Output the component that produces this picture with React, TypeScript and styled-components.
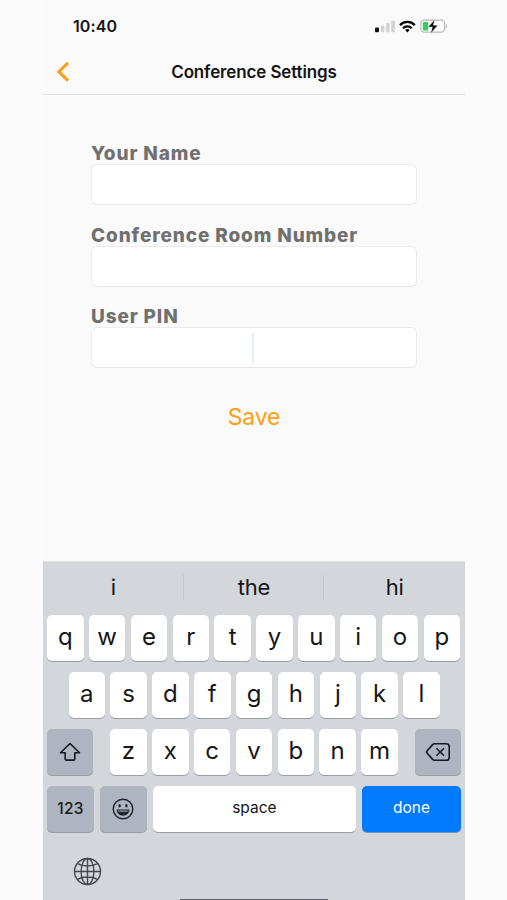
import React from "react";
import styled, { createGlobalStyle } from "styled-components";

const GlobalStyle = createGlobalStyle`
  * { box-sizing: border-box; }
  body { margin: 0; background: #fbfbfb; font-family: Inter, "Liberation Sans", sans-serif; color: #141414; }
`;

const Phone = styled.main`
  width: 422px;
  height: 900px;
  margin-left: 43px;
  background: #fafafa;
  display: flex;
  flex-direction: column;
  overflow: hidden;
`;

const StatusBar = styled.div`
  height: 50px;
  padding: 3px 17px 0 30px;
  display: flex;
  align-items: center;
  justify-content: space-between;
`;

const Clock = styled.span`
  margin-top: -2px;
  font-size: 16px;
  font-weight: 600;
  letter-spacing: 0.1px;
`;

const StatusIcons = styled.svg`
  display: block;
  width: 74px;
  height: 18px;
`;

const NavBar = styled.header`
  height: 45px;
  display: grid;
  grid-template-columns: 40px 1fr 40px;
  align-items: center;
  border-bottom: 1px solid #e2e2e2;
`;

const BackButton = styled.button`
  border: 0;
  background: none;
  padding: 0 0 0 13px;
  height: 44px;
  display: flex;
  align-items: center;
`;

const Title = styled.h1`
  margin: 0;
  font-size: 17px;
  font-weight: 600;
  letter-spacing: -0.13px;
  text-align: center;
`;

const Form = styled.form`
  flex: 1;
  padding: 46px 48px 0;
  display: flex;
  flex-direction: column;
`;

const Field = styled.div`
  height: 81.5px;
  display: flex;
  flex-direction: column;
`;

const Label = styled.label`
  height: 23px;
  line-height: 25px;
  font-size: 19px;
  font-weight: 800;
  letter-spacing: 0.87px;
  color: #707070;
  white-space: nowrap;
`;

const Input = styled.div`
  height: 41px;
  width: 326px;
  display: flex;
  align-items: center;
  justify-content: center;
  border: 1px solid #ebebeb;
  border-bottom-color: #e6e6e6;
  border-radius: 6px;
  background: #fff;
`;

const Caret = styled.span`
  width: 2px;
  height: 31px;
  margin: 2px 3px 0 0;
  background: #e1effc;
`;

const SaveButton = styled.button`
  align-self: center;
  margin-top: 17px;
  padding: 0;
  border: 0;
  background: none;
  font: 400 23px/28px Inter, sans-serif;
  letter-spacing: -0.2px;
  color: #ff9d14;
`;

const Keyboard = styled.section`
  height: 339.5px;
  border-top: 1px solid #dfe1e4;
  background: #d3d6db;
  display: flex;
  flex-direction: column;
`;

const Suggestions = styled.div`
  height: 53px;
  flex: none;
  display: grid;
  grid-template-columns: repeat(3, 1fr);
  align-items: center;
  padding-bottom: 2px;
`;

const Suggestion = styled.span`
  height: 27px;
  line-height: 27px;
  font-size: 22px;
  text-align: center;
  letter-spacing: -0.2px;
  & + & { border-left: 1px solid #c6c9ce; margin-left: -1px; }
`;

const KeyRow = styled.div<{ $inset?: number }>`
  height: 57px;
  flex: none;
  display: flex;
  justify-content: space-between;
  padding: 0 ${(p) => 4 + (p.$inset ?? 0)}px;
`;

const LetterGroup = styled.div`
  display: flex;
  gap: 5.35px;
`;

const Key = styled.button<{ $width?: number; $tone?: "light" | "dark" | "blue"; $size?: number; $weight?: number }>`
  width: ${(p) => p.$width ?? 36.5}px;
  height: 46px;
  padding: 0 0 3px;
  border: 0;
  border-radius: 5px;
  display: flex;
  align-items: center;
  justify-content: center;
  background: ${(p) => (p.$tone === "dark" ? "#afb5c0" : p.$tone === "blue" ? "#007aff" : "#fff")};
  box-shadow: 0 1px 0.5px ${(p) => (p.$tone === "blue" ? "#7393b8" : "#9a9da2")};
  color: ${(p) => (p.$tone === "blue" ? "#fff" : "#171717")};
  font-family: Inter, sans-serif;
  font-size: ${(p) => p.$size ?? 24}px;
  font-weight: ${(p) => p.$weight ?? 400};
`;

const NumberLabel = styled.span`
  padding-top: 2px;
  letter-spacing: 0.2px;
`;

const KeyIcon = styled.svg`
  display: block;
  margin-top: 3px;
`;

const BottomBar = styled.footer`
  flex: 1;
  display: grid;
  grid-template-columns: 137px 148px 1fr;
`;

const GlobeIcon = styled.svg`
  margin: 14px 0 0 30px;
`;

const HomeIndicator = styled.div`
  align-self: end;
  height: 1.5px;
  background: #5d6069;
`;

const fields = [
  { label: "Your Name" },
  { label: "Conference Room Number" },
  { label: "User PIN", focused: true },
];

function Letters({ text }: { text: string }) {
  return (
    <LetterGroup>
      {text.split("").map((c) => <Key key={c}>{c}</Key>)}
    </LetterGroup>
  );
}

export default function App() {
  return (
    <>
      <GlobalStyle />
      <Phone>
        <StatusBar>
          <Clock>10:40</Clock>
          <StatusIcons viewBox="0 0 74 18">
            <rect x="1" y="9.4" width="4" height="4.8" rx="1" fill="#111" />
            <g fill="#d2d2d2">
              <rect x="6.7" y="7.5" width="3.6" height="6.7" rx="1" />
              <rect x="12" y="5" width="3.6" height="9.2" rx="1" />
              <rect x="17.2" y="2.4" width="3.6" height="11.8" rx="1" />
            </g>
            <g fill="none" stroke="#080808" strokeWidth="2.3">
              <path d="M26 7.1c4.1-4.2 10.7-4.2 14.8 0M29 10.2c2.5-2.5 6.3-2.5 8.8 0" />
            </g>
            <path d="M31.1 11.9c1.3-1.1 3.3-1.1 4.6 0l-2.3 2.5z" fill="#080808" />
            <rect x="46.8" y="2.2" width="23.8" height="12" rx="3.6" fill="#fff" stroke="#b8b8b8" strokeWidth="1.2" />
            <path d="M50.3 4h3.8v8.6h-3.8c-1 0-1.5-.6-1.5-1.5V5.5c0-.9.5-1.5 1.5-1.5z" fill="#30d158" />
            <path d="M71.8 6.2c1.7.5 1.7 3.6 0 4.1z" fill="#b5b5b5" />
            <path d="M60.9 1.2 54.2 9h4.2l-1.7 6.4 7.1-8.1h-4.5z" fill="#080808" stroke="#fff" strokeWidth=".4" />
          </StatusIcons>
        </StatusBar>
        <NavBar>
          <BackButton aria-label="Back" type="button">
            <svg width="14" height="22" viewBox="0 0 14 22" fill="none" stroke="#ff9d14" strokeWidth="3">
              <path d="M12 1.8 2.8 10.7l9.2 8.9" />
            </svg>
          </BackButton>
          <Title>Conference Settings</Title>
        </NavBar>
        <Form>
          {fields.map((f) => (
            <Field key={f.label}>
              <Label>{f.label}</Label>
              <Input>{f.focused && <Caret />}</Input>
            </Field>
          ))}
          <SaveButton type="button">Save</SaveButton>
        </Form>
        <Keyboard>
          <Suggestions>
            <Suggestion>i</Suggestion>
            <Suggestion>the</Suggestion>
            <Suggestion>hi</Suggestion>
          </Suggestions>
          <KeyRow><Letters text="qwertyuiop" /></KeyRow>
          <KeyRow $inset={21.5}><Letters text="asdfghjkl" /></KeyRow>
          <KeyRow>
            <Key $tone="dark" $width={46} aria-label="Shift">
              <KeyIcon width="22" height="20" viewBox="0 0 22 20" fill="none" stroke="#161a20" strokeWidth="1.6" strokeLinejoin="round">
                <path d="M11 1.5 1.5 10.8h4.7v6.1c0 .8.4 1.2 1.2 1.2h7.2c.8 0 1.2-.4 1.2-1.2v-6.1h4.7z" />
              </KeyIcon>
            </Key>
            <Letters text="zxcvbnm" />
            <Key $tone="dark" $width={46} aria-label="Delete">
              <KeyIcon width="26" height="20" viewBox="0 0 26 20" fill="none" stroke="#161a20" strokeWidth="1.6" strokeLinejoin="round" strokeLinecap="round">
                <path d="M9.4 1.8h12c1.8 0 2.8 1 2.8 2.8v10.8c0 1.8-1 2.8-2.8 2.8h-12c-.8 0-1.3-.3-1.8-.8L2 11c-.6-.6-.6-1.4 0-2l5.6-6.4c.5-.5 1-.8 1.8-.8zM11.9 6.7l6.6 6.6m0-6.6-6.6 6.6" />
              </KeyIcon>
            </Key>
          </KeyRow>
          <KeyRow>
            <Key $tone="dark" $width={47} $size={15.5} $weight={450}><NumberLabel>123</NumberLabel></Key>
            <Key $tone="dark" $width={47} aria-label="Emoji">
              <KeyIcon width="22" height="22" viewBox="0 0 22 22">
                <circle cx="11" cy="11" r="9.8" fill="none" stroke="#20242a" strokeWidth="1.4" />
                <ellipse cx="7.6" cy="7.7" rx="1.2" ry="1.7" fill="#20242a" />
                <ellipse cx="14.4" cy="7.7" rx="1.2" ry="1.7" fill="#20242a" />
                <path d="M4.7 11.5h12.6c0 3.8-2.7 6.2-6.3 6.2s-6.3-2.4-6.3-6.2z" fill="#20242a" />
                <path d="M6.1 12.5h9.8l-.6 1.2H6.7z" fill="#9aa0aa" />
              </KeyIcon>
            </Key>
            <Key $width={203.5} $size={15.5}>space</Key>
            <Key $width={99} $tone="blue" $size={15.5}>done</Key>
          </KeyRow>
          <BottomBar>
            <GlobeIcon width="29" height="29" viewBox="0 0 29 29" fill="none" stroke="#44484f" strokeWidth="1.4">
              <circle cx="14.5" cy="14.5" r="13" />
              <ellipse cx="14.5" cy="14.5" rx="6.4" ry="13" />
              <path d="M14.5 1.5v26M1.5 14.5h26M4.5 6.6c5.6 3.2 14.4 3.2 20 0M4.5 22.4c5.6-3.2 14.4-3.2 20 0" />
            </GlobeIcon>
            <HomeIndicator />
          </BottomBar>
        </Keyboard>
      </Phone>
    </>
  );
}
